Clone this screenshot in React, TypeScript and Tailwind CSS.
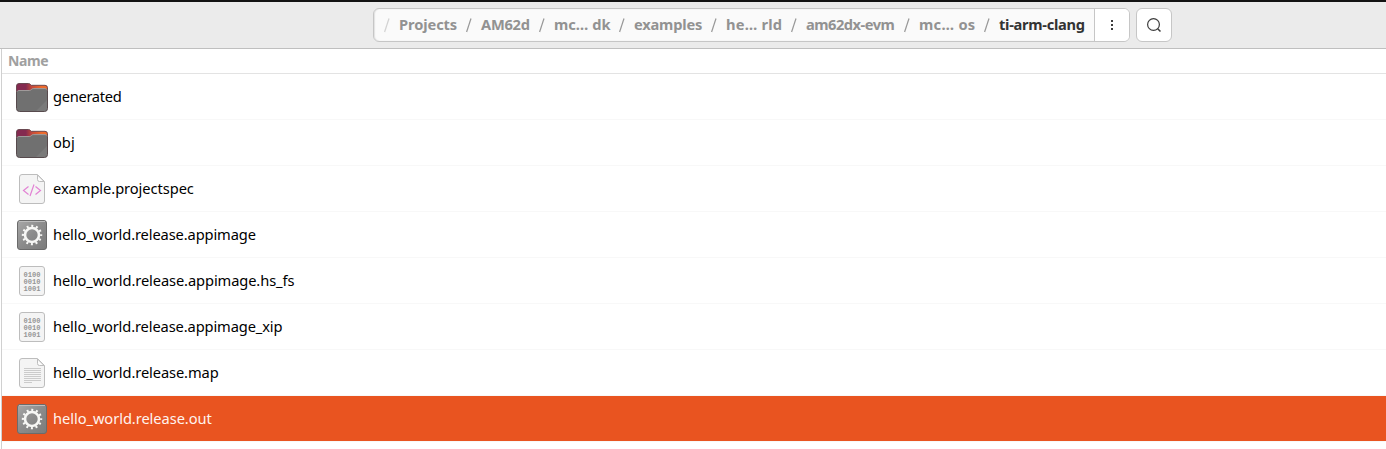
import React from "react";

type Kind = "folder" | "code" | "gear" | "binary" | "text";

const files: { name: string; kind: Kind; tracking: string }[] = [
  { name: "generated", kind: "folder", tracking: "tracking-[-0.3px]" },
  { name: "obj", kind: "folder", tracking: "tracking-[0px]" },
  { name: "example.projectspec", kind: "code", tracking: "tracking-[-0.06px]" },
  { name: "hello_world.release.appimage", kind: "gear", tracking: "tracking-[-0.12px]" },
  { name: "hello_world.release.appimage.hs_fs", kind: "binary", tracking: "tracking-[-0.1px]" },
  { name: "hello_world.release.appimage_xip", kind: "binary", tracking: "tracking-[-0.12px]" },
  { name: "hello_world.release.map", kind: "text", tracking: "tracking-[-0.1px]" },
  { name: "hello_world.release.out", kind: "gear", tracking: "tracking-[-0.06px]" },
];

const crumbs: { label: string; size: string }[] = [
  { label: "Projects", size: "w-[58px] tracking-[-0.1px]" },
  { label: "AM62d", size: "w-[49px] tracking-[-0.25px]" },
  { label: "mc… dk", size: "w-[56px] tracking-[0px]" },
  { label: "examples", size: "w-[68px] tracking-[-0.2px]" },
  { label: "he… rld", size: "w-[56px] tracking-[0.2px]" },
  { label: "am62dx-evm", size: "w-[89px] tracking-[-0.5px]" },
  { label: "mc… os", size: "w-[56px] tracking-[0.3px]" },
];

function Folder() {
  return (
    <svg width="32" height="32" viewBox="0 0 32 32">
      <defs>
        <linearGradient id="folderBack" x1="0" x2="1">
          <stop offset="0.3" stopColor="#842a50" />
          <stop offset="0.5" stopColor="#c4493a" />
          <stop offset="0.8" stopColor="#ee6a2c" />
        </linearGradient>
      </defs>
      <path d="M.5 5a2.500 2.500 0 0 1 2.500-2.500H12.500q1.200 0 2 1l.8 .8H29a2.500 2.500 0 0 1 2.500 2.500V15H.5z" fill="url(#folderBack)" stroke="#604047" strokeWidth=".9" />
      <path d="M.5 11.500a2.200 2.200 0 0 1 2.200-2H13q1.200 0 2-.9l.5-.5q.6-.5 1.600-.5H29a2.500 2.500 0 0 1 2.500 2.300V27.500a3 3 0 0 1-3 3H3.500a3 3 0 0 1-3-3z" fill="#707070" />
      <path d="M.5 11V27.500a3 3 0 0 0 3 3H28.500a3 3 0 0 0 3-3V10" fill="none" stroke="#574a4d" />
      <path d="M1.200 10.500q.4-1 1.700-1H13.200q1.200 0 2-.8 .8-1.100 2-1.100H29q1.200 0 1.800 1" fill="none" stroke="#a09a9a" />
      <path d="M31 19V28a2.500 2.500 0 0 1-2.500 2H20z" fill="#fff" opacity=".07" />
    </svg>
  );
}

function Sheet({ kind }: { kind: Kind }) {
  const folded = kind !== "binary";
  return (
    <svg width="32" height="32" viewBox="0 0 32 32">
      <path
        d={folded
          ? "M6 1.500H21.500L28.500 8.500V28a2.500 2.500 0 0 1-2.500 2.500H6A2.500 2.500 0 0 1 3.500 28V4A2.500 2.500 0 0 1 6 1.500z"
          : "M6 1.500H26A2.500 2.500 0 0 1 28.500 4V28a2.500 2.500 0 0 1-2.500 2.500H6A2.500 2.500 0 0 1 3.500 28V4A2.500 2.500 0 0 1 6 1.500z"}
        fill="#f4f4f4"
        stroke="#bdbdbd"
      />
      {folded && <path d="M21.500 2V6.500a2 2 0 0 0 2 2H28z" fill="#fcfcfc" stroke="#bdbdbd" />}
      {kind === "code" && (
        <path d="M12.500 13.500L7.500 17.500L12.500 21.500M19.500 13.500L24.500 17.500L19.500 21.500M18 11.500L14 23" fill="none" stroke="#e283d4" strokeWidth="1.200" />
      )}
      {kind === "text" && (
        <path d="M8 11.500H25M8 13.500H25M8 15.500H25M8 17.500H25M8 19.500H25M8 21.500H25M8 23.500H25M8 25.500H16" stroke="#cbcbcb" />
      )}
      {kind === "binary" && (
        <g fill="#969696" fontFamily="Liberation Mono, monospace" fontWeight="bold" fontSize="7.1">
          <text x="7.400" y="12">0100</text>
          <text x="7.400" y="19">0010</text>
          <text x="7.400" y="26">1001</text>
        </g>
      )}
    </svg>
  );
}

function Gear() {
  return (
    <svg width="32" height="32" viewBox="0 0 32 32">
      <defs>
        <linearGradient id="gearPlate" x1="0" y1="0" x2="1" y2="1">
          <stop offset="0" stopColor="#a8a8a8" />
          <stop offset="0.5" stopColor="#8b8b8b" />
          <stop offset="1" stopColor="#7b7b7b" />
        </linearGradient>
      </defs>
      <rect x="1.500" y="1.500" width="29" height="29" rx="2.500" fill="url(#gearPlate)" stroke="#6b6b6b" />
      <path d="M3 2.500H29" stroke="#bdbdbd" />
      <circle cx="16" cy="16" r="7" fill="none" stroke="#f7f7f5" strokeWidth="2.600" />
      <circle cx="16" cy="16" r="9" fill="none" stroke="#f7f7f5" strokeWidth="2.400" strokeDasharray="2 2.712" strokeDashoffset="1" />
    </svg>
  );
}

function FileIcon({ kind }: { kind: Kind }) {
  if (kind === "folder") return <Folder />;
  if (kind === "gear") return <Gear />;
  return <Sheet kind={kind} />;
}

function Slash({ faint = false }: { faint?: boolean }) {
  return (
    <svg width="6" height="16" viewBox="0 0 6 16" className={faint ? "shrink-0 opacity-40" : "shrink-0"}>
      <path d="M5 1.500L.6 15" stroke="#989898" strokeWidth="1.200" />
    </svg>
  );
}

export default function App() {
  return (
    <div className="flex h-[449px] w-full flex-col overflow-hidden bg-white font-['Noto_Sans','Open_Sans',sans-serif]">
      <header className="flex h-[49px] shrink-0 border-t-2 border-b border-t-[#131313] border-b-[#bfbfbf] bg-[#ebebeb] pt-1.5 pl-[373px]">
        <div className="flex h-[34px] w-[757px] overflow-hidden rounded-[6px] border border-[#c6c6c6] bg-[#fafafa] shadow-[inset_1px_0_1px_#e2e2e2]">
          <nav className="flex w-[720px] shrink-0 items-center gap-[9px] pl-[10px] text-[14.67px] font-bold whitespace-nowrap text-[#929292]">
            <Slash faint />
            {crumbs.map((c, i) => (
              <React.Fragment key={i}>
                <span className={`shrink-0 pb-0.5 leading-5 ${c.size}`}>{c.label}</span>
                <Slash />
              </React.Fragment>
            ))}
            <span className="w-[86px] shrink-0 pb-0.5 leading-5 tracking-[-0.3px] text-[#333]">ti-arm-clang</span>
          </nav>
          <button className="flex flex-1 items-center justify-center border-l border-[#c6c6c6] bg-white">
            <svg width="16" height="16" viewBox="0 0 16 16" fill="#3d3d3d">
              <path d="M7 3h2v2H7zM7 7h2v2H7zM7 11h2v2H7z" />
            </svg>
          </button>
        </div>
        <button className="ml-1.5 flex h-[34px] w-9 items-center justify-center rounded-[6px] border border-[#c6c6c6] bg-white">
          <svg width="16" height="16" viewBox="0 0 16 16" fill="none" stroke="#3d3d3d" strokeWidth="1.200">
            <circle cx="7.500" cy="7.500" r="5.900" />
            <path d="M11.700 11.700L14.500 14.500" strokeWidth="1.500" />
          </svg>
        </button>
      </header>
      <main className="ml-px flex flex-1 flex-col border-l border-[#d0d0d0]">
        <div className="flex h-[25px] shrink-0 items-center border-b border-[#e3e3e3] pl-1.5 text-[14px] leading-5 font-bold tracking-[-0.35px] text-[#a0a0a0]">
          Name
        </div>
        {files.map((f, i) => {
          const selected = i === files.length - 1;
          return (
            <div
              key={f.name}
              className={`flex h-[46px] shrink-0 items-center gap-[5px] border-b border-[#f8f8f8] bg-clip-padding pl-[14px] ${selected ? "bg-[#e95420] text-[#fff3ee]" : "text-[#000]"}`}
            >
              <FileIcon kind={f.kind} />
              <span className={`pb-0.5 text-[14.67px] leading-5 whitespace-nowrap ${f.tracking}`}>{f.name}</span>
            </div>
          );
        })}
      </main>
    </div>
  );
}
